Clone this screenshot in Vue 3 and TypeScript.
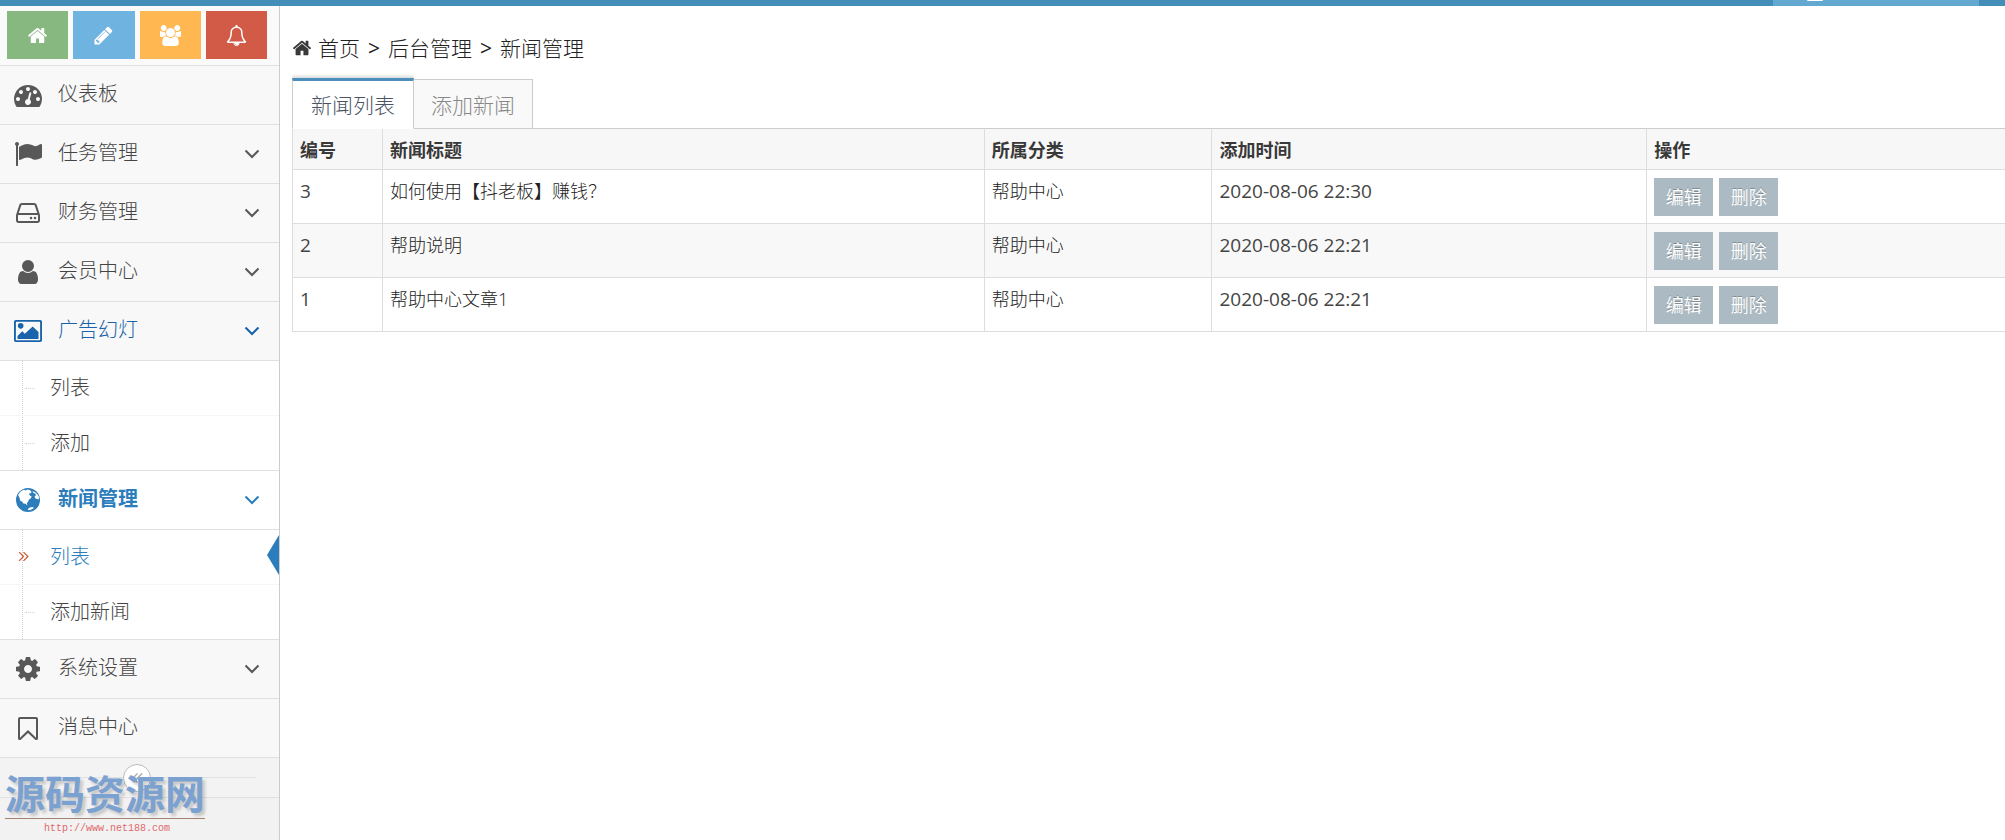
<script setup lang="ts">
import { ref } from 'vue'

interface MenuChild { label: string; current?: boolean }
interface MenuItem {
  label: string
  icon: string
  arrow?: boolean
  state?: 'open' | 'active'
  children?: MenuChild[]
}
interface NewsRow { id: number; title: string; category: string; time: string }

const icons: Record<string, string> = {
  home: 'M1472 992v480q0 26-19 45t-45 19h-384v-384h-256v384h-384q-26 0-45-19t-19-45v-480q0-1 .5-3t.5-3l575-474 575 474q1 2 1 6zm223-69l-62 74q-8 9-21 11h-3q-13 0-21-7l-692-577-692 577q-12 8-24 7-13-2-21-11l-62-74q-8-10-7-23.5t11-21.5l719-599q32-26 76-26t76 26l244 204v-195q0-14 9-23t23-9h192q14 0 23 9t9 23v408l219 182q10 8 11 21.5t-7 23.5z',
  pencil: 'M491 1536l91-91-235-235-91 91v107h128v128h107zm523-928q0-22-22-22-10 0-17 7l-542 542q-7 7-7 17 0 22 22 22 10 0 17-7l542-542q7-7 7-17zm-54-192l416 416-832 832h-416v-416zm683 96q0 53-37 90l-166 166-416-416 166-165q36-38 90-38 53 0 91 38l235 234q37 39 37 91z',
  users: 'M657 896q-162 5-265 128h-134q-82 0-138-40.5t-56-118.5q0-353 124-353 6 0 43.5 21t97.5 42.5 119 21.5q67 0 133-23-5 37-5 66 0 139 81 256zm1071 637q0 120-73 189.5t-194 69.5h-874q-121 0-194-69.5t-73-189.5q0-53 3.5-103.5t14-109 26.5-108.5 43-97.5 62-81 85.5-53.5 111.5-20q10 0 43 21.5t73 48 107 48 135 21.5 135-21.5 107-48 73-48 43-21.5q61 0 111.5 20t85.5 53.5 62 81 43 97.5 26.5 108.5 14 109 3.5 103.5zm-1024-1277q0 106-75 181t-181 75-181-75-75-181 75-181 181-75 181 75 75 181zm704 384q0 159-112.5 271.5t-271.5 112.5-271.5-112.5-112.5-271.5 112.5-271.5 271.5-112.5 271.5 112.5 112.5 271.5zm576 225q0 78-56 118.5t-138 40.5h-134q-103-123-265-128 81-117 81-256 0-29-5-66 66 23 133 23 59 0 119-21.5t97.5-42.5 43.5-21q124 0 124 353zm-128-609q0 106-75 181t-181 75-181-75-75-181 75-181 181-75 181 75 75 181z',
  bell: 'M912 1696q0-16-16-16-59 0-101.5-42.5t-42.5-101.5q0-16-16-16t-16 16q0 73 51.5 124.5t124.5 51.5q16 0 16-16zm-666-288h1300q-266-300-266-832 0-51-24-105t-69-103-121.5-80.5-169.5-31.5-169.5 31.5-121.5 80.5-69 103-24 105q0 532-266 832zm1482 0q0 52-38 90t-90 38h-448q0 106-75 181t-181 75-181-75-75-181h-448q-52 0-90-38t-38-90q50-42 91-88t85-119.5 74.5-158.5 50-206 19.5-260q0-152 117-282.5t307-158.5q-8-19-8-39 0-40 28-68t68-28 68 28 28 68q0 20-8 39 190 28 307 158.5t117 282.5q0 139 19.5 260t50 206 74.5 158.5 85 119.5 91 88z',
  dashboard: 'M384 1152q0-53-37.5-90.5t-90.5-37.5-90.5 37.5-37.5 90.5 37.5 90.5 90.5 37.5 90.5-37.5 37.5-90.5zm192-448q0-53-37.5-90.5t-90.5-37.5-90.5 37.5-37.5 90.5 37.5 90.5 90.5 37.5 90.5-37.5 37.5-90.5zm428 481l101-382q6-26-7.5-48.5t-38.5-29.5-48 6.5-30 39.5l-101 382q-60 5-107 43.5t-63 98.5q-20 77 20 146t117 89 146-20 89-117q16-60-6-117t-72-91zm660-33q0-53-37.5-90.5t-90.5-37.5-90.5 37.5-37.5 90.5 37.5 90.5 90.5 37.5 90.5-37.5 37.5-90.5zm-640-640q0-53-37.5-90.5t-90.5-37.5-90.5 37.5-37.5 90.5 37.5 90.5 90.5 37.5 90.5-37.5 37.5-90.5zm448 192q0-53-37.5-90.5t-90.5-37.5-90.5 37.5-37.5 90.5 37.5 90.5 90.5 37.5 90.5-37.5 37.5-90.5zm320 448q0 261-141 483-19 29-54 29h-1402q-35 0-54-29-141-221-141-483 0-182 71-348t191-286 286-191 348-71 348 71 286 191 191 286 71 348z',
  flag: 'M320 256q0 72-64 110v1266q0 13-9.5 22.5t-22.5 9.5h-64q-13 0-22.5-9.5t-9.5-22.5v-1266q-64-38-64-110 0-53 37.5-90.5t90.5-37.5 90.5 37.5 37.5 90.5zm1472 64v763q0 25-12.5 38.5t-39.5 27.5q-215 116-369 116-61 0-123.5-22t-108.5-48-115.5-48-142.5-22q-192 0-464 146-17 9-33 9-26 0-45-19t-19-45v-742q0-32 31-55 21-14 79-43 236-120 421-120 107 0 200 29t219 88q38 19 88 19 54 0 117.5-21t110-47 88-47 54.5-21q26 0 45 19t19 45z',
  drive: 'M1168 1216q0 33-23.5 56.5t-56.5 23.5-56.5-23.5-23.5-56.5 23.5-56.5 56.5-23.5 56.5 23.5 23.5 56.5zm256 0q0 33-23.5 56.5t-56.5 23.5-56.5-23.5-23.5-56.5 23.5-56.5 56.5-23.5 56.5 23.5 23.5 56.5zm112 160v-320q0-13-9.5-22.5t-22.5-9.5h-1216q-13 0-22.5 9.5t-9.5 22.5v320q0 13 9.5 22.5t22.5 9.5h1216q13 0 22.5-9.5t9.5-22.5zm-1230-480h1180l-157-482q-4-13-16-21.5t-26-8.5h-782q-14 0-26 8.5t-16 21.5zm1358 160v320q0 66-47 113t-113 47h-1216q-66 0-113-47t-47-113v-320q0-25 16-75l197-606q17-53 63-86t101-33h782q55 0 101 33t63 86l197 606q16 50 16 75z',
  user: 'M1536 1399q0 109-62.5 187t-150.5 78h-854q-88 0-150.5-78t-62.5-187q0-85 8.5-160.5t31.5-152 58.5-131 94-89 134.5-34.5q131 128 313 128t313-128q76 0 134.5 34.5t94 89 58.5 131 31.5 152 8.5 160.5zm-256-887q0 159-112.5 271.5t-271.5 112.5-271.5-112.5-112.5-271.5 112.5-271.5 271.5-112.5 271.5 112.5 112.5 271.5z',
  picture: 'M112 192h1568q112 0 112 112v1184q0 112-112 112h-1568q-112 0-112-112v-1184q0-112 112-112zm32 112q-24 0-24 24v1136q0 24 24 24h1504q24 0 24-24v-1136q0-24-24-24zm284 80a180 180 0 1 1 0 360a180 180 0 1 1 0-360zm-204 1024v-200l300-290 170 160 500-470 374 350v450z',
  globe: 'M896 128a768 768 0 1 1 0 1536a768 768 0 1 1 0-1536zM260 560l90 190 50 190 130 70 70 110 140 20 110 100-20-150 90-110 30-110 120-70 60-130-110-60-80-110 130-40 60-80-110-130-190-30-60 70-150-50-160 80-100 110zM1180 330l60 110 120 40 40 110-90 90 60 120 200 60 50-110-110-210-170-160zM870 1490l70 60 180-50 150-90-70-60-190 20z',
  cog: 'M1152 896q0-106-75-181t-181-75-181 75-75 181 75 181 181 75 181-75 75-181zm512-109v222q0 12-8 23t-20 13l-185 28q-19 54-39 91 35 50 107 138 10 12 10 25t-9 23q-27 37-99 108t-94 71q-12 0-26-9l-138-108q-44 23-91 38-16 136-29 186-7 28-36 28h-222q-14 0-24.5-8.5t-11.5-21.5l-28-184q-49-16-90-37l-141 107q-10 9-25 9-14 0-25-11-126-114-165-168-7-10-7-23 0-12 8-23 15-21 51-66.5t54-70.5q-27-50-41-99l-183-27q-13-2-21-12.5t-8-23.5v-222q0-12 8-23t19-13l186-28q14-46 39-92-40-57-107-138-10-12-10-24 0-10 9-23 26-36 98.5-107.5t94.5-71.5q13 0 26 10l138 107q44-23 91-38 16-136 29-186 7-28 36-28h222q14 0 24.5 8.5t11.5 21.5l28 184q49 16 90 37l142-107q9-9 24-9 13 0 25 10 129 119 165 170 7 8 7 22 0 12-8 23-15 21-51 66.5t-54 70.5q26 50 41 98l183 28q13 2 21 12.5t8 23.5z',
  bookmark: 'M384 192h1024q128 0 128 128v1240q0 110-104 110-44 0-76-30l-460-432-460 432q-32 30-76 30-104 0-104-110v-1240q0-128 128-128zm0 128v1192l512-490 512 490v-1192z',
}

const shortcuts = [
  { name: '首页', icon: 'home', tone: 'green' },
  { name: '编辑', icon: 'pencil', tone: 'blue' },
  { name: '会员', icon: 'users', tone: 'orange' },
  { name: '消息', icon: 'bell', tone: 'red' },
]

const menu: MenuItem[] = [
  { label: '仪表板', icon: 'dashboard' },
  { label: '任务管理', icon: 'flag', arrow: true },
  { label: '财务管理', icon: 'drive', arrow: true },
  { label: '会员中心', icon: 'user', arrow: true },
  { label: '广告幻灯', icon: 'picture', arrow: true, state: 'open', children: [{ label: '列表' }, { label: '添加' }] },
  { label: '新闻管理', icon: 'globe', arrow: true, state: 'active', children: [{ label: '列表', current: true }, { label: '添加新闻' }] },
  { label: '系统设置', icon: 'cog', arrow: true },
  { label: '消息中心', icon: 'bookmark' },
]

const tabs = ['新闻列表', '添加新闻']
const activeTab = ref(0)

const rows: NewsRow[] = [
  { id: 3, title: '如何使用【抖老板】赚钱？', category: '帮助中心', time: '2020-08-06 22:30' },
  { id: 2, title: '帮助说明', category: '帮助中心', time: '2020-08-06 22:21' },
  { id: 1, title: '帮助中心文章1', category: '帮助中心', time: '2020-08-06 22:21' },
]
</script>

<template>
  <div class="app">
    <header class="topbar"><div class="account"><span class="avatar"></span></div></header>
    <div class="body">
      <aside class="sidebar">
        <div class="shortcuts">
          <button v-for="s in shortcuts" :key="s.icon" type="button" class="shortcut" :class="s.tone" :aria-label="s.name">
            <svg :viewBox="s.icon === 'users' ? '128 0 1792 1792' : '0 0 1792 1792'"><path :d="icons[s.icon]" /></svg>
          </button>
        </div>
        <nav>
          <ul class="menu">
            <li v-for="item in menu" :key="item.label" class="item" :class="item.state">
              <a href="#" class="link">
                <svg class="icon" viewBox="0 0 1792 1792"><path fill-rule="evenodd" :d="icons[item.icon]" /></svg>
                <span class="label">{{ item.label }}</span>
                <svg v-if="item.arrow" class="chevron" viewBox="0 0 16 16"><path d="M1.5 4.5 8 11l6.5-6.5" /></svg>
              </a>
              <ul v-if="item.children" class="submenu">
                <li v-for="child in item.children" :key="child.label" :class="{ current: child.current }">
                  <a href="#" class="sublink">
                    <svg v-if="child.current" class="mark" viewBox="0 0 10 10"><path d="M1 1l4 4-4 4M5 1l4 4-4 4" /></svg>
                    {{ child.label }}
                  </a>
                </li>
              </ul>
            </li>
          </ul>
        </nav>
        <div class="collapse">
          <button type="button" aria-label="收起菜单">
            <svg viewBox="0 0 12 12"><path d="M6 1L1 6l5 5M11 1L6 6l5 5" /></svg>
          </button>
        </div>
      </aside>

      <main class="content">
        <nav class="crumbs">
          <svg viewBox="0 0 1792 1792"><path :d="icons.home" /></svg>
          <a href="#">首页</a><span>&gt;</span><a href="#">后台管理</a><span>&gt;</span><a href="#">新闻管理</a>
        </nav>
        <div class="tabs" role="tablist">
          <button
            v-for="(tab, i) in tabs" :key="tab" type="button" role="tab" class="tab"
            :class="{ selected: activeTab === i }" :aria-selected="activeTab === i" @click="activeTab = i"
          >{{ tab }}</button>
        </div>
        <table class="news">
          <colgroup><col class="c-id" /><col class="c-title" /><col class="c-cat" /><col class="c-time" /><col /></colgroup>
          <thead>
            <tr><th>编号</th><th>新闻标题</th><th>所属分类</th><th>添加时间</th><th>操作</th></tr>
          </thead>
          <tbody>
            <tr v-for="row in rows" :key="row.id">
              <td class="num">{{ row.id }}</td>
              <td>{{ row.title }}</td>
              <td>{{ row.category }}</td>
              <td class="num">{{ row.time }}</td>
              <td><div class="actions"><button type="button">编辑</button><button type="button">删除</button></div></td>
            </tr>
          </tbody>
        </table>
      </main>
    </div>
    <div class="brand">
      <strong>源码资源网</strong>
      <span>http://www.net188.com</span>
    </div>
  </div>
</template>

<style>
body { margin: 0; background: #fff; }
</style>

<style scoped>
.app {
  min-height: 100vh;
  display: flex;
  flex-direction: column;
  overflow: hidden;
  font-family: "Open Sans", "Noto Sans CJK SC", sans-serif;
  font-size: 18px;
  font-weight: 300;
  line-height: 27px;
  color: #222;
}
a { color: inherit; text-decoration: none; }
button { font: inherit; border: 0; padding: 0; cursor: pointer; }
ul { list-style: none; margin: 0; padding: 0; }
svg { display: block; fill: currentColor; flex: none; }

.topbar { height: 6px; background: #438eb9; display: flex; justify-content: flex-end; padding-right: 26px; }
.account { width: 206px; background: #62a8d1; }
.avatar { display: block; width: 16px; height: 1px; margin-left: 34px; background: #fff; border-radius: 0 0 8px 8px; }

.body { flex: 1; display: flex; }
.sidebar { width: 279px; flex: none; background: #f2f2f2; border-right: 1px solid #ccc; }
.shortcuts { height: 59px; box-sizing: border-box; padding: 5px 12px 6px 7px; display: flex; gap: 5px; background: #fafafa; }
.shortcut { flex: 1; display: flex; align-items: center; justify-content: center; color: #fff; }
.shortcut svg { width: 21px; height: 21px; }
.green { background: #87b87f; }
.blue { background: #6fb3e0; }
.orange { background: #ffb752; }
.red { background: #d15b47; }

.item { border-top: 1px solid #e0e0e0; color: #585858; }
.link { height: 58px; display: flex; align-items: center; padding: 0 19px 0 14px; background: #f8f8f8; font-size: 20px; }
.icon { width: 28px; height: 28px; }
.label { flex: 1; margin-left: 16px; padding-bottom: 3px; color: #444; }
.chevron { width: 16px; height: 16px; fill: none; stroke: currentColor; stroke-width: 2; }
.open > .link, .open > .link .label { color: #1963aa; }
.active > .link { color: #2b7dbc; background: #fff; font-weight: 700; }
.active > .link .label { color: #2b7dbc; }

.submenu { background: #fff; border-top: 1px solid #e0e0e0; position: relative; color: #444; }
.submenu::before { content: ""; position: absolute; left: 22px; top: 0; bottom: 0; border-left: 1px dotted #ccd0d6; }
.submenu li { position: relative; }
.submenu li + li { border-top: 1px dotted #eee; }
.submenu li::before { content: ""; position: absolute; left: 25px; top: 27px; width: 10px; border-top: 1px dotted #ccd6dd; }
.sublink { display: flex; align-items: center; height: 54px; box-sizing: border-box; padding: 0 0 1px 50px; font-size: 20px; position: relative; }
.submenu .current { color: #2b7dbc; }
.submenu .current::before { display: none; }
.current::after {
  content: "";
  position: absolute;
  right: 0;
  top: 5px;
  border: 20px solid transparent;
  border-left: 0;
  border-right: 12px solid #2b7dbc;
}
.mark { position: absolute; left: 18px; top: 21px; width: 11px; height: 11px; fill: none; stroke: #c86139; stroke-width: 1.2; }

.collapse { height: 39px; border: solid #e0e0e0; border-width: 1px 0; display: flex; align-items: center; padding: 0 23px; background: #f3f3f3; }
.collapse::before, .collapse::after { content: ""; height: 1px; background: #e0e0e0; flex: 100; }
.collapse::after { flex: 104; }
.collapse button {
  width: 28px; height: 28px; box-sizing: border-box; border: 1px solid #bbb; border-radius: 50%;
  background: #fff; color: #aaa; display: flex; align-items: center; justify-content: center;
}
.collapse svg { width: 11px; height: 12px; fill: none; stroke: currentColor; stroke-width: 1.5; }

.content { flex: 1; min-width: 0; padding: 27px 0 0 12px; }
.crumbs { height: 30px; display: flex; align-items: center; font-size: 21px; line-height: 30px; }
.crumbs svg { width: 20px; height: 20px; margin-right: 6px; color: #393939; }
.crumbs span { margin: 0 8px; font-weight: 400; }
.tabs { display: flex; align-items: flex-end; margin-top: 15px; position: relative; }
.tab {
  height: 50px; padding: 3px 17px 0; margin-bottom: -1px; background: #f9f9f9; color: #888;
  border: 1px solid #ccc; border-left: 0; font-size: 21px;
}
.tab.selected {
  height: 51px; padding: 1px 18px 0; background: #fff; color: #4a5464; border-left: 1px solid #ccc;
  border-top: 3px solid #4c8fbd; border-bottom-color: #fff; box-shadow: 0 -2px 3px rgba(0, 0, 0, .15);
  clip-path: inset(-4px 0 0 0);
}

.news { width: 100%; table-layout: fixed; border-collapse: separate; border-spacing: 0; border-left: 1px solid #ddd; }
.c-id { width: 5.2%; }
.c-title { width: 35.15%; }
.c-cat { width: 13.3%; }
.c-time { width: 25.4%; }
.news th, .news td { text-align: left; vertical-align: top; padding: 8px 7px 7px; border-bottom: 1px solid #ddd; }
.news th + th, .news td + td { border-left: 1px solid #ddd; }
.news th { padding-bottom: 5px; border-top: 1px solid #ccc; background: #f7f7f7; font-weight: 700; color: #393939; }
.news tbody tr:nth-child(even) { background: #f8f8f8; }
.news td.num { font-size: 19px; font-weight: 400; color: #444; }
.actions { display: flex; gap: 6px; }
.actions button { width: 59px; height: 38px; background: #abbac3; color: #fff; text-shadow: 0 -1px 0 rgba(0, 0, 0, .25); font-weight: 400; }

.brand { position: absolute; left: 5px; bottom: 1px; width: 200px; text-align: center; }
.brand strong { display: block; font-size: 40px; line-height: 48px; font-weight: 700; color: #7ba1d0; text-shadow: 3px 3px 3px rgba(0, 0, 0, .18); border-bottom: 1px solid #a5816f; white-space: nowrap; }
.brand span { display: block; padding-left: 4px; font: 10px/20px "Liberation Mono", monospace; color: #e0696b; }
</style>
